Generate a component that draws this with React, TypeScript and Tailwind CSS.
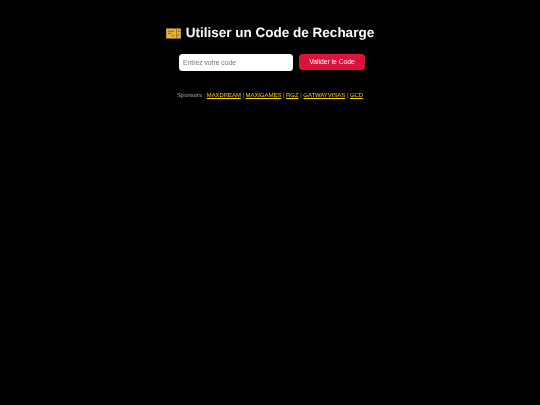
import type React from "react";

const sponsors = ["MAXDREAM", "MAXIGAMES", "RGZ", "GATWAYVISAS", "GCD"];

// Ticket emoji drawn by hand
const TicketIcon: React.FC = () => (
	<svg width="15" height="11" viewBox="0 0 16 12" aria-hidden="true">
		<rect x="0" y="0.5" width="16" height="11" fill="#e8b53c" />
		<rect x="11" y="0.5" width="1" height="11" fill="#8a6a1c" />
		<rect x="2" y="3" width="7" height="1" fill="#7d6020" />
		<rect x="2" y="5.5" width="4" height="1" fill="#7d6020" />
		<rect x="6" y="8" width="3" height="1" fill="#7d6020" />
		<rect x="13" y="3" width="1.5" height="1.5" fill="#7d6020" />
		<rect x="13" y="7" width="1.5" height="1.5" fill="#7d6020" />
	</svg>
);

export default function App() {
	return (
		<div className="min-h-[405px] bg-black pt-[20px] text-center font-['Liberation_Sans',Arial,sans-serif] text-white blur-[0.4px] [text-rendering:geometricPrecision]">
			<h1 className="flex h-[26px] items-center justify-center gap-[5px] font-bold text-[13.5px]">
				<TicketIcon />
				<span>Utiliser un Code de Recharge</span>
			</h1>

			<div className="mt-[8px] ml-[4px] flex items-start justify-center gap-[6px]">
				<input
					placeholder="Entrez votre code"
					className="h-[17px] w-[114px] rounded-[3.5px] bg-white px-[4px] text-[6.75px] text-black outline-none placeholder:text-[#757575]"
				/>
				<button className="h-[16px] w-[66px] rounded-[3.5px] bg-[#dc143c] text-[6.75px] text-white">
					Valider le Code
				</button>
			</div>

			<p className="mt-[20px] text-[5.9px] text-[#aaaaaa] leading-[10px]">
				Sponsors :{" "}
				{sponsors.map((name, i) => (
					<span key={name}>
						<a href="#" className="text-[#ffd700] underline">
							{name}
						</a>
						{i < sponsors.length - 1 ? " | " : ""}
					</span>
				))}
			</p>
		</div>
	);
}
